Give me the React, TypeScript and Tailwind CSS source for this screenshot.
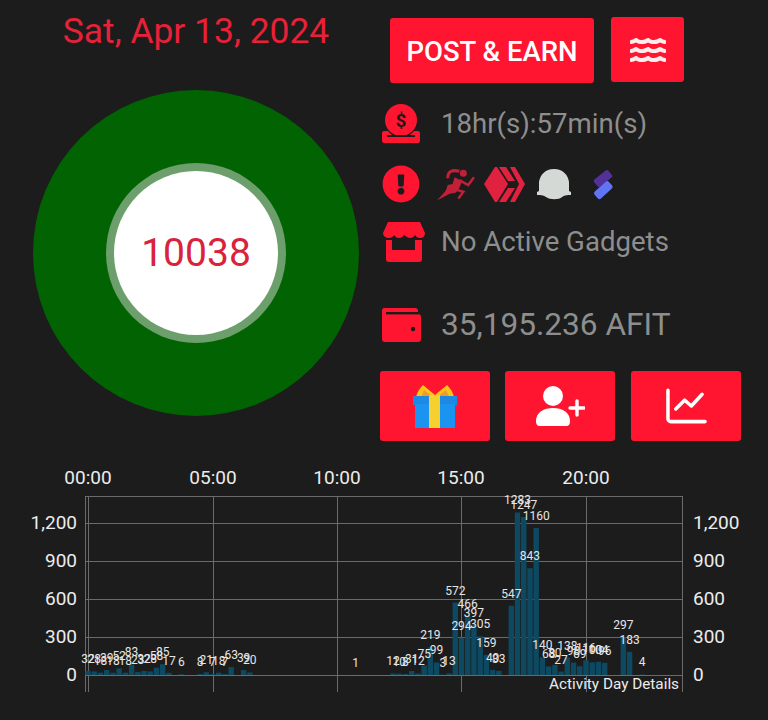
import React from 'react';
import { FaWater, FaExclamationCircle } from 'react-icons/fa';

const FONT = 'font-["Roboto","Liberation_Sans",sans-serif]';

// value per 15-minute slot
const bins: Record<number, number> = {
    0: 32, 1: 28, 2: 18, 3: 39, 4: 18, 5: 52, 6: 18, 7: 83, 8: 23, 9: 32, 10: 28, 11: 58, 12: 85, 13: 17, 15: 6,
    18: 8, 19: 21, 20: 7, 21: 18, 22: 7, 23: 63, 25: 39, 26: 20, 43: 1,
    49: 12, 50: 10, 51: 8, 52: 31, 53: 12, 54: 75, 55: 219, 56: 99, 57: 3, 58: 13,
    59: 572, 60: 294, 61: 466, 62: 397, 63: 305, 64: 159, 65: 40, 66: 33,
    68: 547, 69: 1283, 70: 1247, 71: 843, 72: 1160, 73: 140, 74: 68, 75: 80, 76: 27,
    77: 138, 78: 98, 79: 69, 80: 116, 81: 100, 82: 104, 83: 96, 86: 297, 87: 183, 89: 4,
};

const slotX = (i: number) => 88 + i * 6.225;
const valueY = (v: number) => 675 - (v * 38) / 300;

const ActivityChart = () => (
    <svg viewBox="0 460 768 260" className="block w-[768px] h-[260px]" fontFamily="Roboto, sans-serif">
        {[496, 523, 561, 599, 637, 675].map(y => (
            <line key={y} x1={85} x2={682} y1={y + 0.5} y2={y + 0.5} stroke="#6a6a6a" />
        ))}
        {[85, 88, 213, 337, 461, 586, 682].map(x => (
            <line key={x} x1={x + 0.5} x2={x + 0.5} y1={496} y2={692} stroke="#6a6a6a" />
        ))}
        {Object.entries(bins).map(([i, v]) => (
            <rect key={i} x={slotX(+i) - 2.7} y={valueY(v)} width={5.4} height={(v * 38) / 300} fill="#0d4a62" />
        ))}
        {[['00:00', 88], ['05:00', 213], ['10:00', 337], ['15:00', 461], ['20:00', 586]].map(([t, x]) => (
            <text key={t} x={x} y={484} textAnchor="middle" fontSize={19} fill="#ececec">{t}</text>
        ))}
        {[['1,200', 523], ['900', 561], ['600', 599], ['300', 637], ['0', 675]].map(([t, y]) => (
            <React.Fragment key={t}>
                <text x={77} y={+y + 6} textAnchor="end" fontSize={19} fill="#ececec">{t}</text>
                <text x={693} y={+y + 6} fontSize={19} fill="#ececec">{t}</text>
            </React.Fragment>
        ))}
        {Object.entries(bins).map(([i, v]) => (
            <text key={i} x={slotX(+i)} y={valueY(v) - 8} textAnchor="middle" fontSize={12} fill="#e6e6e6">{v}</text>
        ))}
        <text x={679} y={689} textAnchor="end" fontSize={15.3} fill="#ececec">Activity Day Details</text>
    </svg>
);

const CoinIcon = () => (
    <svg viewBox="0 0 40 40" className="w-10 h-10">
        <circle cx="20" cy="16" r="16" fill="#ff1530" />
        <text x="20" y="23" textAnchor="middle" fontSize="19" fontWeight="700" fontFamily="Roboto, sans-serif" fill="#1c1c1c">$</text>
        <path d="M3 27h4c2 3 5 5 13 5s11-2 13-5h4c1 0 2 1 2 2v8c0 1-1 2-2 2H3c-1 0-2-1-2-2v-8c0-1 1-2 2-2z" fill="#ff1530" />
        <rect x="6" y="31" width="28" height="2" fill="#1c1c1c" />
    </svg>
);

const RunnerIcon = () => (
    <svg viewBox="0 0 39 33" className="w-[38px] h-[33px]">
        <circle cx="27" cy="5" r="3.6" fill="#c21f38" />
        <path d="M11 10C11 3 16 1 23 3" fill="none" stroke="#c21f38" strokeWidth="3.2" />
        <path d="M23 12l9 5 6-8" fill="none" stroke="#c21f38" strokeWidth="2.6" />
        <path d="M18 9l8 4-4 9-3 3-6 1L0 33l9-10 2-6 5-1z" fill="#c21f38" />
        <path d="M20 22l7 2-5 7" fill="none" stroke="#c21f38" strokeWidth="2.6" />
    </svg>
);

const HiveIcon = () => (
    <svg viewBox="0 0 41 37" className="w-[41px] h-[37px]">
        <path d="M0 18 11 1h2l11 17-11 18h-2z" fill="#e0213f" />
        <path d="M15 1h7l9 14h-7z" fill="#e0213f" />
        <path d="M15 36l9-14h7l-9 14z" fill="#e0213f" />
        <path d="M26 1h5l10 17-10 18h-5l9-18z" fill="#e0213f" />
    </svg>
);

const HelmetIcon = () => (
    <svg viewBox="0 0 34 32" className="w-[34px] h-[32px]">
        <path d="M17 1c9 0 14 6 15 13v9l2 1v3c-3 0-6 0-9 2-3 3-12 3-16 0-3-2-6-2-9-2v-3l2-1v-9C3 7 8 1 17 1z" fill="#d5d9d6" />
    </svg>
);

const StackIcon = () => (
    <svg viewBox="0 0 24 36" className="w-[22px] h-[34px]">
        <rect x="2" y="7" width="20" height="10" rx="2" transform="rotate(-38 12 12)" fill="#54309a" />
        <rect x="2" y="20" width="21" height="10" rx="2.5" transform="rotate(-42 12 25)" fill="#5f75f5" />
    </svg>
);

const StoreIcon = () => (
    <svg viewBox="0 0 42 40" className="w-[42px] h-[40px] ml-[5px] shrink-0">
        <path d="M5 0h32l5 11c0 3-2 5-5 5-2 0-4-1-5-3-1 2-3 3-5 3s-3-1-6-3c-1 2-3 3-5 3s-4-1-5-3c-1 2-3 3-5 3-3 0-6-2-6-5z" fill="#ff1530" />
        <path d="M3 18h6v10h23V18h7v19c0 2-1 3-3 3H6c-2 0-3-1-3-3z" fill="#ff1530" />
    </svg>
);

const WalletIcon = () => (
    <svg viewBox="0 0 40 36" className="w-10 h-9">
        <path d="M3 1h31c2 0 3 1 3 3v1H5v2h32c2 0 3 1 3 3v22c0 2-1 3-3 3H4c-2 0-3-1-3-3V4c0-2 1-3 2-3z" fill="#ff1530" />
        <rect x="5" y="5" width="33" height="2.4" fill="#1c1c1c" />
        <circle cx="32" cy="22" r="2.2" fill="#1c1c1c" />
    </svg>
);

const GiftIcon = () => (
    <svg viewBox="0 0 44 44" className="w-[44px] h-[44px]">
        <path d="M3 13 C4 8 7 4 10 1 L22 11 L34 1 C37 4 40 8 41 13z" fill="#f5c518" />
        <path d="M8 13 L11 6 L20 13z M36 13 L33 6 L24 13z" fill="#f09a2a" />
        <path d="M0 12h44v9H0z" fill="#1e88e5" />
        <path d="M2 20h40v24H2z" fill="#1a94f0" />
        <rect x="16" y="11" width="11" height="33" fill="#f6d02f" />
    </svg>
);

const UserPlusIcon = () => (
    <svg viewBox="0 0 50 42" className="w-[50px] h-[42px]">
        <circle cx="18" cy="11" r="10" fill="#fff" />
        <path d="M1 36c0-9 8-13 17-13s17 4 17 13c0 3-1 5-4 5H5c-3 0-4-2-4-5z" fill="#fff" />
        <path d="M42 16v14M35 23h14" stroke="#fff" strokeWidth="3.4" strokeLinecap="round" />
    </svg>
);

const ChartIcon = () => (
    <svg viewBox="0 0 42 36" className="w-[41px] h-[36px]" fill="none" stroke="#fff" strokeWidth="3.6" strokeLinecap="round" strokeLinejoin="round">
        <path d="M2 2v29a3 3 0 0 0 3 3h35" />
        <path d="M10 21l9-9 7 6 11-12" />
    </svg>
);

const InfoRow = ({ icon, children, className }: { icon: React.ReactNode; children?: React.ReactNode; className: string }) => (
    <div className={`flex items-center h-10 pl-[1px] ${className}`}>
        <div className="w-10 h-10 mr-5 flex items-center justify-center shrink-0">{icon}</div>
        {children}
    </div>
);

const ActionButton = ({ children }: { children: React.ReactNode }) => (
    <button className="w-[110px] h-[70px] rounded-[3px] bg-[#ff1530] flex items-center justify-center">{children}</button>
);

export default function App() {
    return (
        <div className={`w-[768px] h-[720px] overflow-hidden bg-[#1c1c1c] ${FONT}`}>
            <div className="flex h-[460px]">
                <div className="w-[380px] pl-[33px] pr-[21px] pt-[11px] flex flex-col items-center shrink-0">
                    <div className="h-10 leading-10 text-[35.4px] text-[#e62138] whitespace-nowrap">Sat, Apr 13, 2024</div>
                    <div className="mt-[39px] w-[326px] h-[326px] rounded-full bg-[#016301] flex items-center justify-center shrink-0">
                        <div className="w-[180px] h-[180px] rounded-full bg-[#6c9f6c] flex items-center justify-center">
                            <div className="w-[164px] h-[164px] rounded-full bg-white flex items-center justify-center text-[39px] text-[#d9233b]">
                                10038
                            </div>
                        </div>
                    </div>
                </div>
                <div className="flex-1 flex flex-col pt-[17px]">
                    <div className="flex pl-[10px] gap-[17px] h-[65px]">
                        <button className="w-[204px] h-[65px] mt-[1px] pt-[2px] rounded-[3px] bg-[#ff1530] text-white text-[27.5px] font-medium whitespace-nowrap">POST &amp; EARN</button>
                        <button className="w-[73px] h-[65px] rounded-[3px] bg-[#ff1530] flex items-center justify-center">
                            <FaWater className="w-[36px] h-[32px] text-[#fdecec]" />
                        </button>
                    </div>
                    <InfoRow icon={<CoinIcon />} className="mt-[22px]">
                        <span className="text-[27.6px] text-[#8e8e8e] whitespace-nowrap">18hr(s):57min(s)</span>
                    </InfoRow>
                    <InfoRow icon={<FaExclamationCircle className="w-[38px] h-[38px] text-[#ff1530]" />} className="mt-[20px]">
                        <div className="flex items-center -ml-[4px]">
                            <RunnerIcon />
                            <div className="ml-[9px]"><HiveIcon /></div>
                            <div className="ml-[12px]"><HelmetIcon /></div>
                            <div className="ml-[21px]"><StackIcon /></div>
                        </div>
                    </InfoRow>
                    <InfoRow icon={<StoreIcon />} className="mt-[18px]">
                        <span className="text-[27.6px] text-[#8e8e8e] whitespace-nowrap">No Active Gadgets</span>
                    </InfoRow>
                    <InfoRow icon={<WalletIcon />} className="mt-[43px]">
                        <span className="text-[31.6px] text-[#8e8e8e] whitespace-nowrap">35,195.236 AFIT</span>
                    </InfoRow>
                    <div className="flex gap-[15px] mt-[26px]">
                        <ActionButton><GiftIcon /></ActionButton>
                        <ActionButton><UserPlusIcon /></ActionButton>
                        <div className="ml-[1px]"><ActionButton><ChartIcon /></ActionButton></div>
                    </div>
                </div>
            </div>
            <ActivityChart />
        </div>
    );
}
